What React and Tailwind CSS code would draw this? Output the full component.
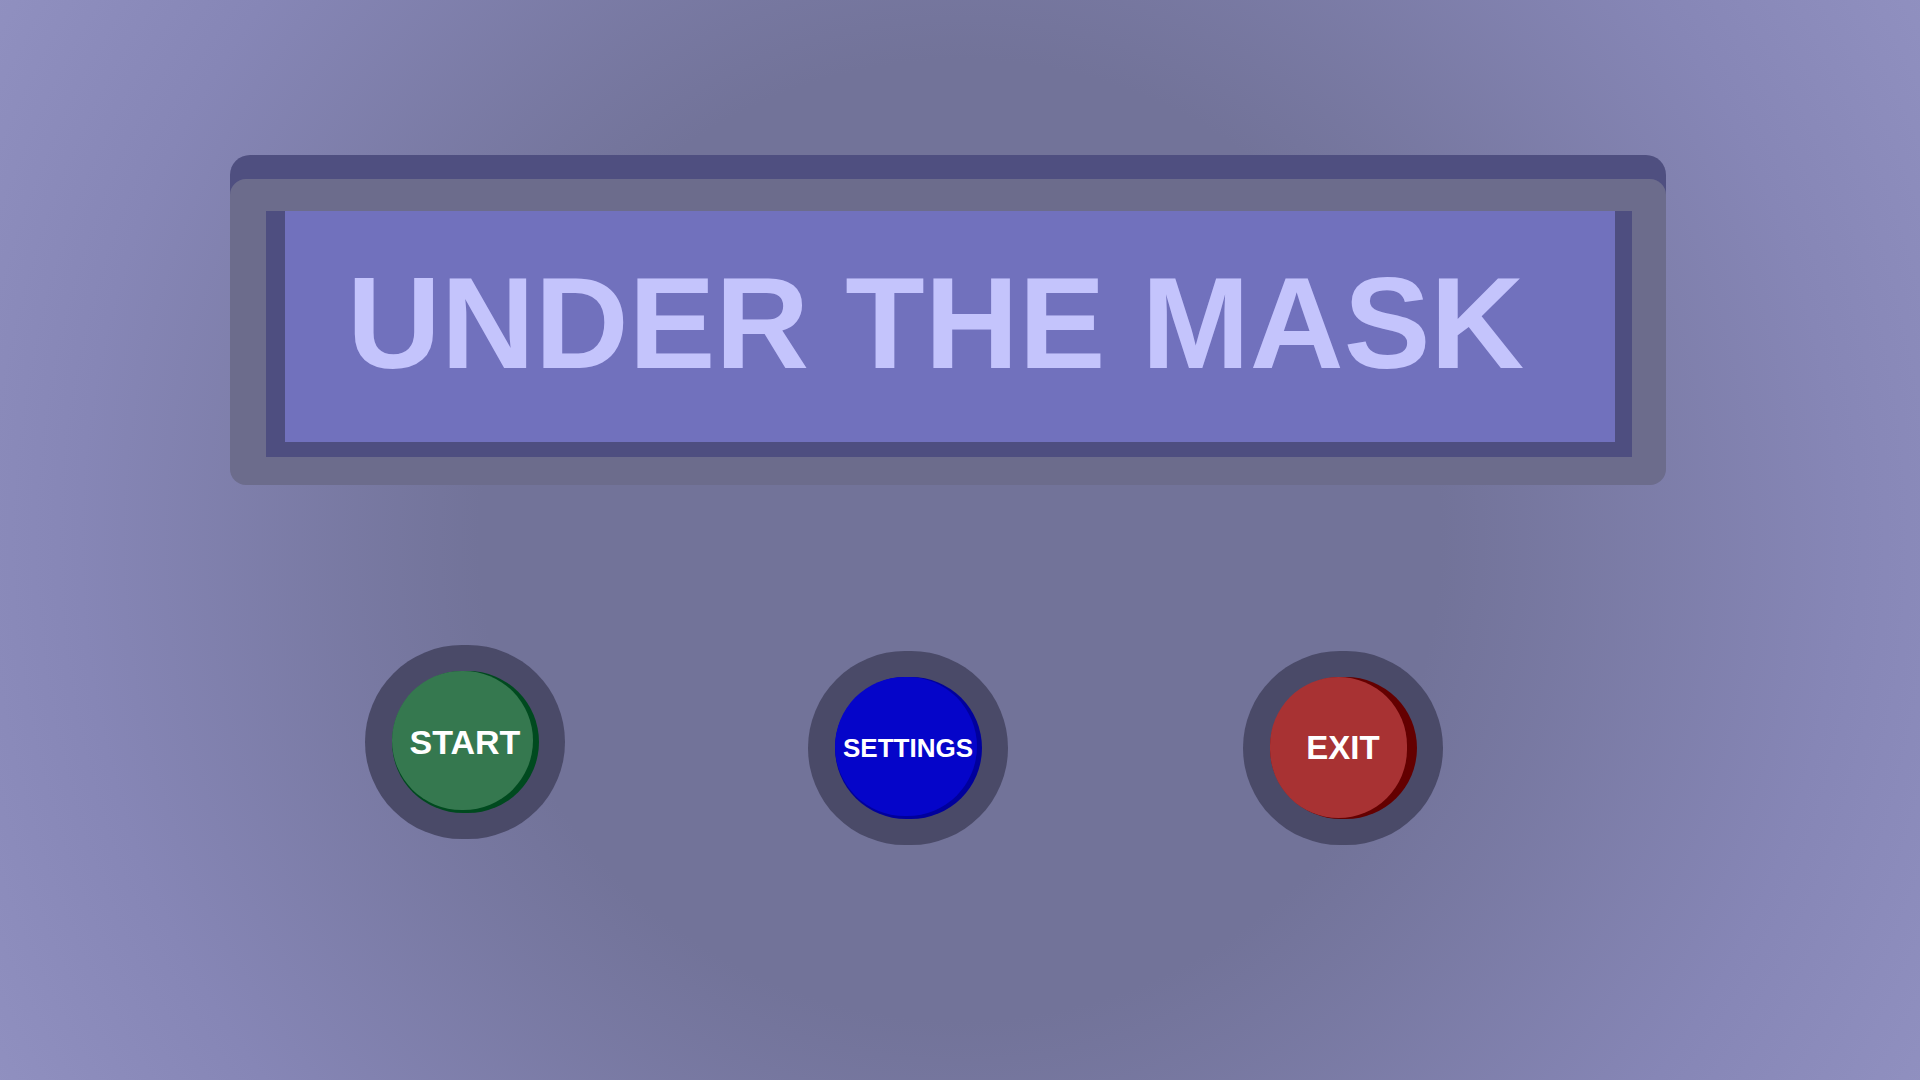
const buttons = [
  {
    label: 'START',
    ring: 'ml-[365px] mt-0',
    base: 'bg-[#004a1f]',
    face: 'bg-[#35784f] w-[141px] h-[139px]',
    text: 'text-[34px]',
  },
  {
    label: 'SETTINGS',
    ring: 'ml-[243px] mt-[6px]',
    base: 'bg-[#00009c]',
    face: 'bg-[#0505c9] w-[142px] h-[139px]',
    text: 'text-[26px]',
  },
  {
    label: 'EXIT',
    ring: 'ml-[235px] mt-[6px]',
    base: 'bg-[#640000]',
    face: 'bg-[#a83233] w-[137px] h-[141px]',
    text: 'text-[33px]',
  },
];

function RoundButton({ label, ring, base, face, text }) {
  return (
    <button
      type="button"
      className={`${ring} flex h-[194px] w-[200px] shrink-0 items-center justify-center rounded-full bg-[#4a4a68]`}
    >
      <div className={`relative h-[142px] w-[147px] rounded-full ${base}`}>
        <div className={`absolute left-0 top-0 rounded-full ${face}`} />
        <span
          className={`absolute inset-0 flex items-center justify-center font-['Liberation_Sans',Arial,sans-serif] font-bold text-white ${text}`}
        >
          {label}
        </span>
      </div>
    </button>
  );
}

export default function App() {
  return (
    <div className="min-h-screen w-full overflow-hidden bg-[radial-gradient(circle_at_50%_50%,#727399_0px,#727399_480px,#8686b6_880px,#9090c0_1110px)] pt-[155px]">
      {/* title plate */}
      <div className="ml-[230px] w-[1436px] rounded-t-[20px] bg-[linear-gradient(#4f4f80_0_60px,transparent_60px)] pt-[24px]">
        <div className="rounded-[16px] bg-[#6c6c8c] pb-[28px] pl-[36px] pr-[34px] pt-[32px]">
          <div className="border-b-[15px] border-l-[19px] border-r-[17px] border-t-0 border-[#4e4e80]">
            <div className="h-[231px] bg-[#7171bd] pl-[62px] pt-[47px]">
              <h1 className="font-['Liberation_Sans',Arial,sans-serif] text-[130px] font-bold leading-none text-[#c4c4fc]">
                UNDER THE MASK
              </h1>
            </div>
          </div>
        </div>
      </div>

      {/* menu */}
      <div className="mt-[160px] flex items-start">
        {buttons.map((b) => (
          <RoundButton key={b.label} {...b} />
        ))}
      </div>
    </div>
  );
}
